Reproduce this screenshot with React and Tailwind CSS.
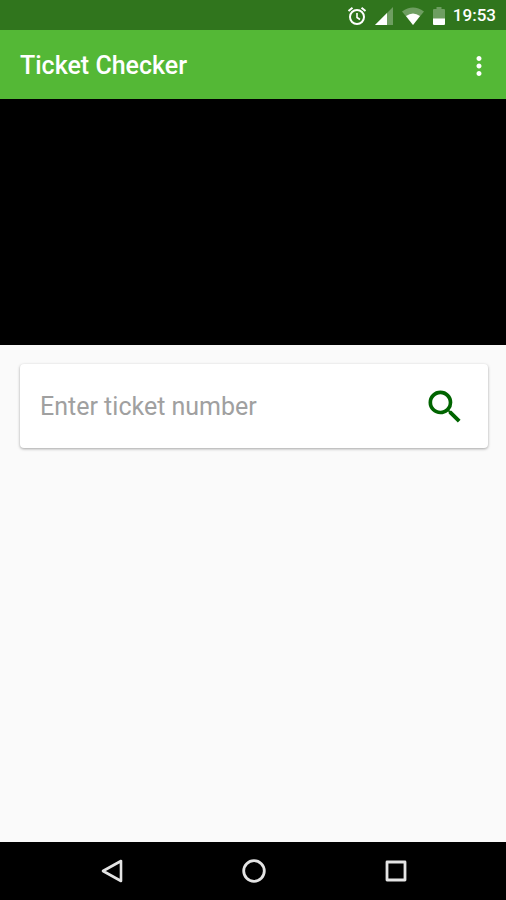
import { useState } from 'react';
import { MdMoreVert, MdSearch } from 'react-icons/md';

const StatusBar = () => (
  <div className="h-[30px] shrink-0 bg-[#30751d] flex items-center justify-end gap-2 pt-px pr-[10px] text-white">
    <svg viewBox="0 0 20 20" className="w-5 h-5" fill="none" stroke="currentColor" strokeWidth="2">
      <circle cx="10" cy="11" r="7" />
      <path d="M10 7V11.500L13 13.500" strokeWidth="1.600" />
      <path d="M1.500 5L5.500 1.800M18.500 5L14.500 1.800" />
    </svg>
    <svg viewBox="0 0 18 18" className="w-[18px] h-[18px]" fill="currentColor">
      <path d="M18 0V18H0Z" opacity="0.3" />
      <path d="M12 6V18H0Z" />
    </svg>
    <svg viewBox="0 0 24 18" className="w-6 h-[18px]" fill="currentColor">
      <path d="M12 18L1 4.500Q12 -3.500 23 4.500Z" opacity="0.3" />
      <path d="M12 18L5 9Q12 4 19 9Z" />
    </svg>
    <svg viewBox="0 0 12 18" className="w-3 h-[18px]" fill="currentColor">
      <path d="M0 12V3Q0 2 1 2H3.500V0H8.500V2H11Q12 2 12 3V12Z" opacity="0.3" />
      <path d="M0 11.500H12V17Q12 18 11 18H1Q0 18 0 17Z" />
    </svg>
    <span className="text-[17px] font-medium">19:53</span>
  </div>
);

const AppBar = () => (
  <header className="h-[69px] shrink-0 bg-[#54b836] flex items-center justify-between pt-[2px] pl-5 pr-3 text-white">
    <h1 className="text-[25px] font-medium">Ticket Checker</h1>
    <button type="button" aria-label="More options">
      <MdMoreVert className="w-[30px] h-[30px]" />
    </button>
  </header>
);

const TicketSearch = () => {
  const [ticket, setTicket] = useState('');

  return (
    <form
      onSubmit={e => e.preventDefault()}
      className="h-[84px] bg-white rounded-sm shadow-[0_1px_3px_rgba(0,0,0,0.35)] flex items-center pt-[2px] pl-5 pr-[21px]"
    >
      <input
        type="text"
        aria-label="Ticket number"
        placeholder="Enter ticket number"
        value={ticket}
        onChange={e => setTicket(e.target.value)}
        className="flex-1 min-w-0 text-[25px] text-gray-800 placeholder:text-[#a0a0a0] outline-none"
      />
      <button type="submit" aria-label="Search" className="text-[#006400]">
        <MdSearch className="w-11 h-11" />
      </button>
    </form>
  );
};

const NavBar = () => (
  <nav className="h-[58px] shrink-0 bg-black flex items-center justify-center pl-[2px] text-[#e4e4e4]">
    <button type="button" aria-label="Back" className="w-[142px] flex justify-center">
      <svg viewBox="0 0 24 24" className="w-6 h-6" fill="none" stroke="currentColor" strokeWidth="2.600" strokeLinejoin="round">
        <path d="M21 2V22L3 12Z" />
      </svg>
    </button>
    <button type="button" aria-label="Home" className="w-[142px] flex justify-center">
      <svg viewBox="0 0 24 24" className="w-6 h-6" fill="none" stroke="currentColor" strokeWidth="2.800">
        <circle cx="12" cy="12" r="10.300" />
      </svg>
    </button>
    <button type="button" aria-label="Recent apps" className="w-[142px] flex justify-center">
      <svg viewBox="0 0 24 24" className="w-6 h-6" fill="none" stroke="currentColor" strokeWidth="2.800" strokeLinejoin="round">
        <rect x="3" y="3" width="18" height="18" />
      </svg>
    </button>
  </nav>
);

const App = () => (
  <div className="min-h-screen flex flex-col bg-[#fafafa] font-[Roboto,sans-serif]">
    <StatusBar />
    <AppBar />
    {/* camera preview */}
    <div className="h-[246px] shrink-0 bg-black" />
    <main className="flex-1 pl-5 pr-[18px] py-[19px]">
      <TicketSearch />
    </main>
    <NavBar />
  </div>
);

export default App;
